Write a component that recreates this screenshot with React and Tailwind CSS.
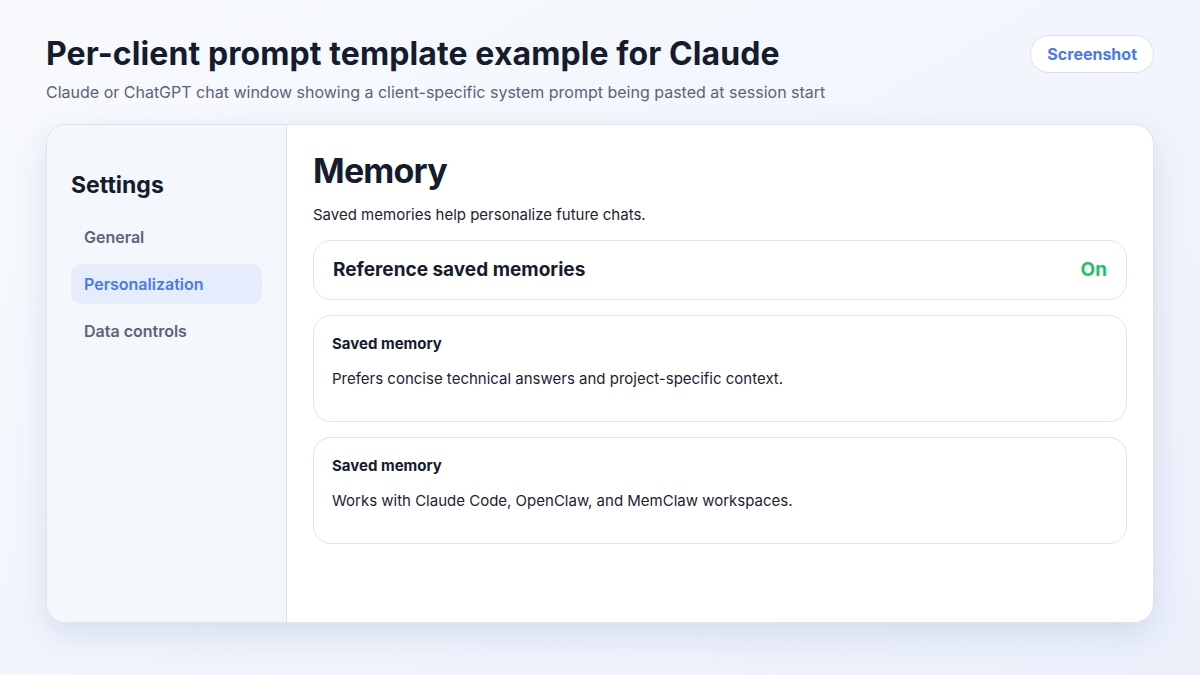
export default function App() {
  const nav = [
    { label: "General", active: false },
    { label: "Personalization", active: true },
    { label: "Data controls", active: false },
  ];
  const memories = [
    "Prefers concise technical answers and project-specific context.",
    "Works with Claude Code, OpenClaw, and MemClaw workspaces.",
  ];
  return (
    <div
      className="w-[1200px] h-[675px] overflow-hidden bg-gradient-to-br from-[#f8fafd] to-[#ebf0fb] px-[46px] pt-[35px]"
      style={{ fontFamily: "Inter, 'Noto Sans', sans-serif" }}
    >
      <div className="flex items-start justify-between">
        <div>
          <h1 className="text-[32px] leading-[38px] font-bold text-[#141c2e] tracking-[0.1px]">
            Per-client prompt template example for Claude
          </h1>
          <p className="mt-[8px] text-[16px] leading-[22px] text-[#5a6478]">
            Claude or ChatGPT chat window showing a client-specific system prompt being pasted at session start
          </p>
        </div>
        <div className="h-[38px] px-[16px] flex items-center rounded-full bg-white border border-[#d9e1ee] text-[16px] font-bold text-[#4a78f0]">
          Screenshot
        </div>
      </div>

      <div className="mt-[21px] h-[499px] flex rounded-[20px] border border-[#dde4f0] bg-white overflow-hidden shadow-[0_12px_32px_rgba(120,140,190,0.22)]">
        <aside className="w-[240px] shrink-0 bg-[#f4f7fc] border-r border-[#d9e3f2] px-[24px] pt-[46px]">
          <h2 className="text-[23px] leading-[28px] font-bold text-[#141c2e]">Settings</h2>
          <nav className="mt-[18px] flex flex-col gap-[7px]">
            {nav.map((n) => (
              <div
                key={n.label}
                className={
                  n.active
                    ? "h-[40px] flex items-center px-[13px] rounded-[10px] bg-[#e5edfc] text-[16px] font-semibold text-[#4a78f0]"
                    : "h-[40px] flex items-center px-[13px] rounded-[10px] text-[16px] font-semibold text-[#5a6478]"
                }
              >
                {n.label}
              </div>
            ))}
          </nav>
        </aside>

        <main className="flex-1 pl-[26px] pr-[26px] pt-[24px]">
          <h2 className="text-[34px] leading-[44px] font-bold text-[#141c2e] tracking-[-0.8px]">Memory</h2>
          <p className="mt-[12px] text-[15px] leading-[20px] text-[#1c2333]">
            Saved memories help personalize future chats.
          </p>
          <div className="mt-[15px] flex flex-col gap-[15px]">
            <div className="h-[60px] flex items-center justify-between px-[19px] rounded-[18px] border border-[#dde4f0] bg-white">
              <span className="text-[19px] font-bold text-[#141c2e]">Reference saved memories</span>
              <span className="text-[19px] font-bold text-[#27c068]">On</span>
            </div>
            {memories.map((m, i) => (
              <div
                key={i}
                className="h-[107px] px-[18px] pt-[18px] rounded-[18px] border border-[#dde4f0] bg-white"
              >
                <div className="text-[15px] leading-[20px] font-bold text-[#141c2e]">Saved memory</div>
                <div className="mt-[15px] text-[15px] leading-[20px] text-[#1c2333]">{m}</div>
              </div>
            ))}
          </div>
        </main>
      </div>
    </div>
  );
}
